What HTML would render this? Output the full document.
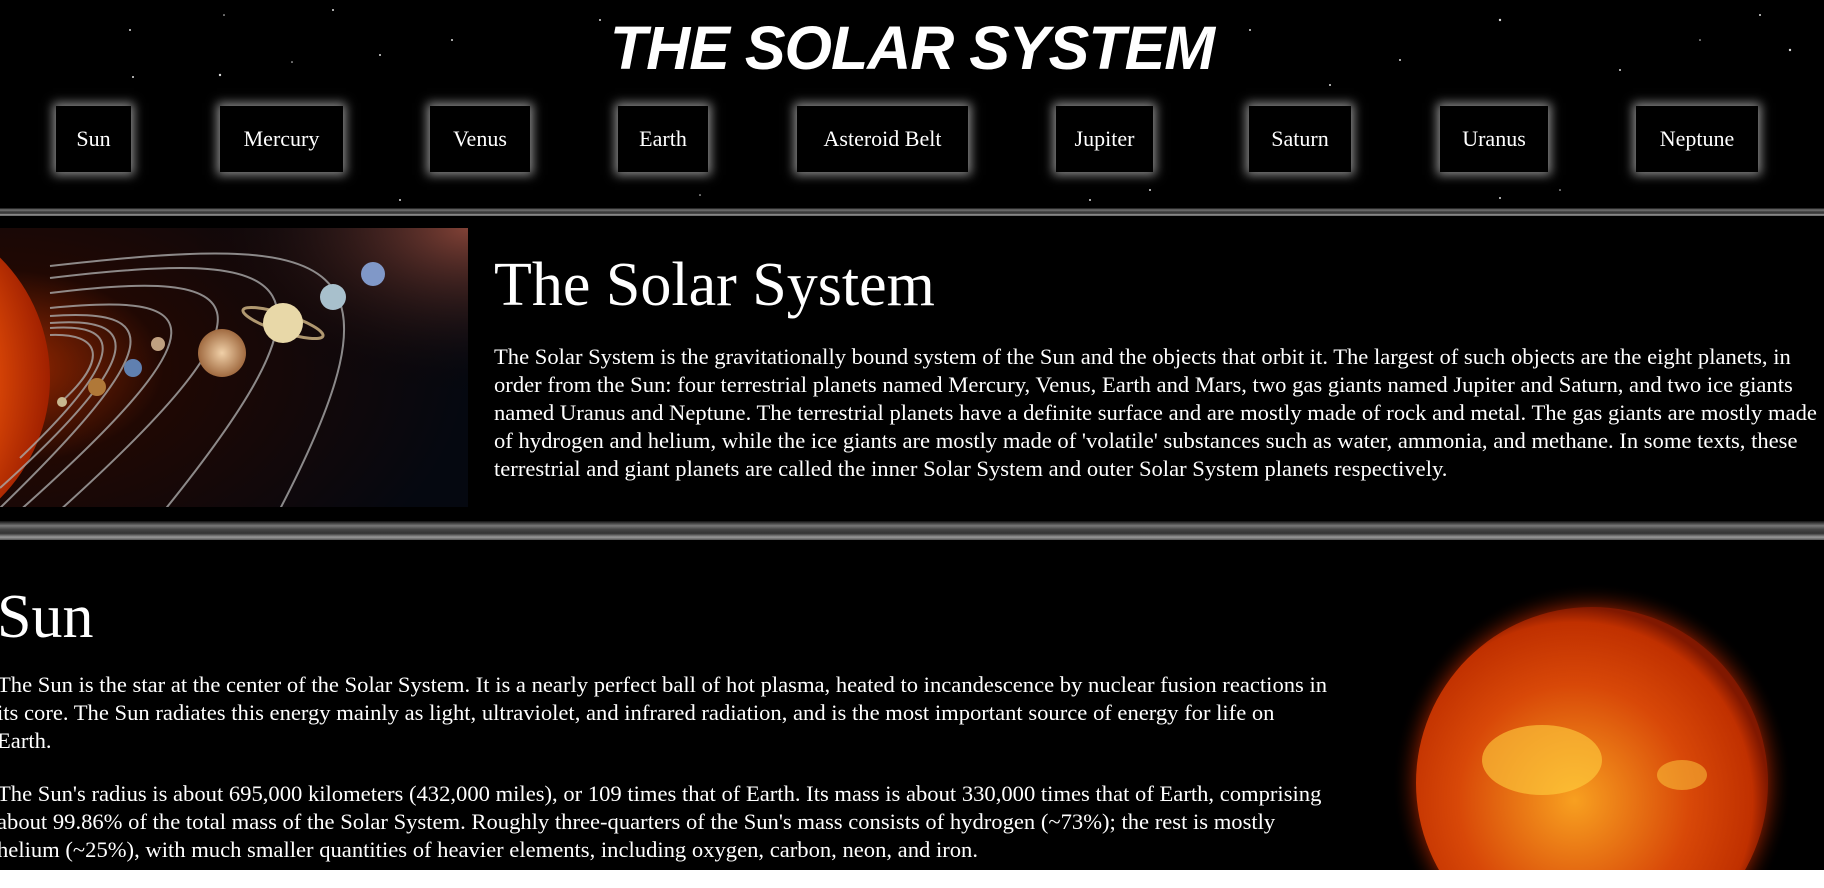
<!DOCTYPE html>
<html><head><meta charset="utf-8"><style>
*{margin:0;padding:0;box-sizing:border-box}
html,body{width:1824px;height:888px;overflow:hidden}
body{background:#fff;font-family:"Liberation Serif",serif;color:#fff;position:relative}
#hdr{position:absolute;left:0;top:0;width:1824px;height:216px;background:#000;overflow:hidden}
.band{position:absolute;left:0;width:1824px;background:linear-gradient(#111 0%,#777 25%,#444 45%,#333 65%,#999 85%,#555 100%)}
h1.t{position:absolute;left:0;width:1824px;top:10px;text-align:center;font-family:"Liberation Sans",sans-serif;font-weight:bold;font-style:italic;font-size:61px;letter-spacing:-1px;line-height:76px}
.nb{position:absolute;top:106px;height:66px;background:#000;box-shadow:0 0 10px 3px rgba(255,255,255,.55);font-size:22px;line-height:66px;text-align:center}
#s1{position:absolute;left:0;top:216px;width:1824px;height:305px;background:#000}
#s2{position:absolute;left:0;top:540px;width:1824px;height:330px;background:#000;overflow:hidden}
h2{font-weight:normal;font-size:62px;line-height:70px}
p{font-size:22.6px;line-height:28px}
</style></head><body>
<div id="hdr">
<svg width="1824" height="216" style="position:absolute;left:0;top:0">
<g fill="#ddd">
<circle cx="130" cy="30" r="1"/><circle cx="220" cy="75" r="1.2"/><circle cx="333" cy="10" r="1"/><circle cx="380" cy="55" r="1"/><circle cx="133" cy="77" r="1"/><circle cx="292" cy="62" r="0.8"/><circle cx="224" cy="15" r="0.8"/><circle cx="452" cy="40" r="1"/><circle cx="600" cy="20" r="1"/><circle cx="1250" cy="30" r="1"/><circle cx="1400" cy="60" r="1"/><circle cx="1500" cy="20" r="1.2"/><circle cx="1620" cy="70" r="1"/><circle cx="1760" cy="15" r="1"/><circle cx="1790" cy="50" r="1.2"/><circle cx="1700" cy="40" r="0.8"/><circle cx="1330" cy="85" r="1"/><circle cx="1150" cy="190" r="1"/><circle cx="1090" cy="200" r="1"/><circle cx="400" cy="200" r="1"/><circle cx="700" cy="195" r="0.8"/><circle cx="1500" cy="198" r="1"/><circle cx="1560" cy="190" r="0.8"/>
</g></svg>
<h1 class="t">THE SOLAR SYSTEM</h1>
<div class="nb" style="left:56px;width:75px">Sun</div>
<div class="nb" style="left:220px;width:123px">Mercury</div>
<div class="nb" style="left:430px;width:100px">Venus</div>
<div class="nb" style="left:618px;width:90px">Earth</div>
<div class="nb" style="left:797px;width:171px">Asteroid Belt</div>
<div class="nb" style="left:1056px;width:97px">Jupiter</div>
<div class="nb" style="left:1249px;width:102px">Saturn</div>
<div class="nb" style="left:1440px;width:108px">Uranus</div>
<div class="nb" style="left:1636px;width:122px">Neptune</div>
<div class="band" style="top:208px;height:8px"></div>
</div>
<div id="s1">
<svg width="468" height="279" style="position:absolute;left:0;top:12px">
<defs>
<radialGradient id="bg1" cx="0" cy="0.5" r="1"><stop offset="0" stop-color="#a02a00"/><stop offset="0.35" stop-color="#200803"/><stop offset="1" stop-color="#050810"/></radialGradient>
<radialGradient id="tr" cx="1" cy="0" r="0.6"><stop offset="0" stop-color="#a05040" stop-opacity=".8"/><stop offset="1" stop-color="#000" stop-opacity="0"/></radialGradient>
<radialGradient id="sn" cx="0.3" cy="0.5" r="0.7"><stop offset="0" stop-color="#ffb030"/><stop offset="0.7" stop-color="#e85008"/><stop offset="1" stop-color="#a02000"/></radialGradient>
<radialGradient id="jp"><stop offset="0" stop-color="#f0d0a8"/><stop offset="1" stop-color="#a06a40"/></radialGradient>
</defs>
<rect width="468" height="279" fill="url(#bg1)"/>
<rect width="468" height="279" fill="url(#tr)"/>
<circle cx="-120" cy="150" r="170" fill="url(#sn)"/>
<g fill="none" stroke="#aaa" stroke-width="2" opacity=".8">
<path d="M50 107 C100 105 110 130 60 175"/>
<path d="M50 100 C120 95 130 125 20 230"/>
<path d="M50 95 C140 88 150 125 0 260"/>
<path d="M50 88 C160 80 170 115 0 280"/>
<path d="M50 80 C200 65 240 90 0 300"/>
<path d="M50 65 C250 40 300 70 40 300"/>
<path d="M50 50 C300 20 360 45 150 300"/>
<path d="M50 38 C340 5 420 20 270 300"/>
</g>
<circle cx="62" cy="174" r="5" fill="#c8b890"/>
<circle cx="97" cy="159" r="9" fill="#b07838"/>
<circle cx="133" cy="140" r="9" fill="#6080b0"/>
<circle cx="158" cy="116" r="7" fill="#c0a080"/>
<circle cx="222" cy="125" r="24" fill="url(#jp)"/>
<ellipse cx="283" cy="95" rx="42" ry="9" fill="none" stroke="#b09870" stroke-width="3" transform="rotate(18 283 95)"/>
<circle cx="283" cy="95" r="20" fill="#e8d8a8"/>
<circle cx="333" cy="69" r="13" fill="#a8c0cc"/>
<circle cx="373" cy="46" r="12" fill="#8098c8"/>
</svg>
<h2 style="position:absolute;left:494px;top:34px">The Solar System</h2>
<p style="position:absolute;left:494px;top:127px;width:1325px">The Solar System is the gravitationally bound system of the Sun and the objects that orbit it. The largest of such objects are the eight planets, in order from the Sun: four terrestrial planets named Mercury, Venus, Earth and Mars, two gas giants named Jupiter and Saturn, and two ice giants named Uranus and Neptune. The terrestrial planets have a definite surface and are mostly made of rock and metal. The gas giants are mostly made of hydrogen and helium, while the ice giants are mostly made of 'volatile' substances such as water, ammonia, and methane. In some texts, these terrestrial and giant planets are called the inner Solar System and outer Solar System planets respectively.</p>
</div>
<div class="band" style="top:521px;height:19px"></div>
<div id="s2">
<svg width="420" height="290" style="position:absolute;left:1382px;top:40px">
<defs><radialGradient id="sg" cx="0.45" cy="0.55" r="0.55"><stop offset="0" stop-color="#f8a020"/><stop offset="0.6" stop-color="#d84808"/><stop offset="0.92" stop-color="#c03000"/><stop offset="1" stop-color="#801800"/></radialGradient>
<radialGradient id="gl"><stop offset="0.85" stop-color="#e03000" stop-opacity=".6"/><stop offset="1" stop-color="#000" stop-opacity="0"/></radialGradient></defs>
<circle cx="210" cy="203" r="200" fill="url(#gl)"/>
<circle cx="210" cy="203" r="176" fill="url(#sg)"/>
<ellipse cx="160" cy="180" rx="60" ry="35" fill="#ffd040" opacity=".6"/>
<ellipse cx="300" cy="195" rx="25" ry="15" fill="#ffd040" opacity=".5"/>
</svg>
<h2 style="position:absolute;left:-3px;top:42px">Sun</h2>
<p style="position:absolute;left:-3px;top:131px;width:1336px">The Sun is the star at the center of the Solar System. It is a nearly perfect ball of hot plasma, heated to incandescence by nuclear fusion reactions in its core. The Sun radiates this energy mainly as light, ultraviolet, and infrared radiation, and is the most important source of energy for life on Earth.</p>
<p style="position:absolute;left:-3px;top:240px;width:1336px">The Sun's radius is about 695,000 kilometers (432,000 miles), or 109 times that of Earth. Its mass is about 330,000 times that of Earth, comprising about 99.86% of the total mass of the Solar System. Roughly three-quarters of the Sun's mass consists of hydrogen (~73%); the rest is mostly helium (~25%), with much smaller quantities of heavier elements, including oxygen, carbon, neon, and iron.</p>
</div>
</body></html>
